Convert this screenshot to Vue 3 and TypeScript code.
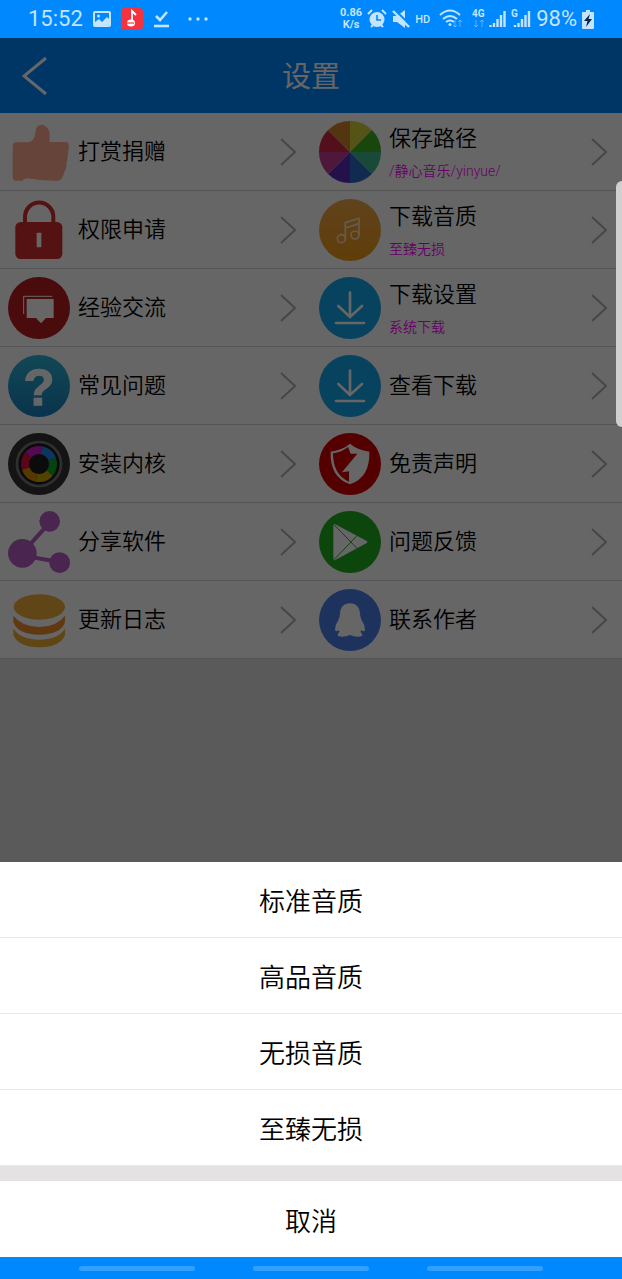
<script setup lang="ts">
interface Setting {
  icon: string
  title: string
  note?: string
}

const settings: Setting[] = [
  { icon: 'thumb', title: '打赏捐赠' },
  { icon: 'wheel', title: '保存路径', note: '/静心音乐/yinyue/' },
  { icon: 'lock', title: '权限申请' },
  { icon: 'music', title: '下载音质', note: '至臻无损' },
  { icon: 'chat', title: '经验交流' },
  { icon: 'download', title: '下载设置', note: '系统下载' },
  { icon: 'question', title: '常见问题' },
  { icon: 'download', title: '查看下载' },
  { icon: 'lens', title: '安装内核' },
  { icon: 'shield', title: '免责声明' },
  { icon: 'share', title: '分享软件' },
  { icon: 'play', title: '问题反馈' },
  { icon: 'discs', title: '更新日志' },
  { icon: 'penguin', title: '联系作者' },
]

const qualities: string[] = ['标准音质', '高品音质', '无损音质', '至臻无损']

const wheelColors = ['#d8d040', '#3cb01e', '#40b890', '#2c6cc8', '#5a28b8', '#c03c90', '#d02848', '#d08828']
const lensColors = ['#1e88e5', '#0fa52a', '#c9a800', '#d88a00', '#e0103c', '#d818c8']

function slice(index: number): string {
  const point = (n: number) => {
    const angle = (n * Math.PI) / 4
    return `${(93 + 93 * Math.sin(angle)).toFixed(1)} ${(93 - 93 * Math.cos(angle)).toFixed(1)}`
  }
  return `M93 93L${point(index)}A93 93 0 0 1 ${point(index + 1)}Z`
}
</script>

<template>
  <div class="screen">
    <header class="status">
      <div class="status-left">
        <span class="clock">15:52</span>
        <svg class="ic-picture" viewBox="0 0 18 16" aria-hidden="true">
          <rect x="1" y="1" width="16" height="14" rx="1" fill="none" stroke="currentColor" stroke-width="2" />
          <circle cx="5.500" cy="5" r="1.500" fill="currentColor" />
          <path d="M2 14V11L6 8L9 11L14 6L16 8V14Z" fill="currentColor" />
        </svg>
        <svg class="ic-app" viewBox="0 0 22 22" aria-hidden="true">
          <rect width="22" height="22" rx="4" fill="#f5333f" />
          <path d="M11 14V3L15 7" fill="none" stroke="#fff" stroke-width="1.800" />
          <ellipse cx="10" cy="15" rx="4" ry="3.600" fill="#fff" />
          <path d="M6 15H13" stroke="#f5333f" stroke-width="1.200" />
        </svg>
        <svg class="ic-check" viewBox="0 0 17 18" aria-hidden="true">
          <path d="M3 6L7 10L14 2" fill="none" stroke="currentColor" stroke-width="2.600" />
          <path d="M1 16H16" stroke="currentColor" stroke-width="2.600" />
        </svg>
        <svg class="ic-dots" viewBox="0 0 20 4" fill="currentColor" aria-hidden="true">
          <circle cx="2" cy="2" r="1.700" /><circle cx="10" cy="2" r="1.700" /><circle cx="18" cy="2" r="1.700" />
        </svg>
      </div>
      <div class="status-right">
        <span class="speed">0.86<br />K/s</span>
        <svg class="ic-alarm" viewBox="0 0 20 20" aria-hidden="true">
          <circle cx="10" cy="10.500" r="7.500" fill="currentColor" />
          <path d="M10 6V11H14" fill="none" stroke="#0088ff" stroke-width="1.600" />
          <path d="M1 5L5 1M19 5L15 1M4 18L6 16M16 18L14 16" stroke="currentColor" stroke-width="2" />
        </svg>
        <svg class="ic-mute" viewBox="0 0 18 20" aria-hidden="true">
          <path d="M1 7H5L13 1V19L5 13H1Z" fill="currentColor" />
          <path d="M3 1L18 16" stroke="#0088ff" stroke-width="2" />
          <path d="M1 2L17 18" stroke="currentColor" stroke-width="2.400" />
        </svg>
        <span class="hd">HD</span>
        <svg class="ic-wifi" viewBox="0 0 24 20" fill="none" stroke="currentColor" aria-hidden="true">
          <path d="M1 6Q11 -3 21 6M4 10Q11 4 18 10M7 13Q11 10 15 13" stroke-width="2" />
          <circle cx="11" cy="15.500" r="1.500" fill="currentColor" stroke="none" />
          <path d="M16 11V18M14 16L16 18L18 16M21 18V11M19 13L21 11L23 13" opacity="0.45" />
        </svg>
        <svg class="ic-net" viewBox="0 0 34 22" aria-hidden="true">
          <text x="0" y="9" class="net">4G</text>
          <path d="M4 12V19M2 17L4 19L6 17M10 19V12M8 14L10 12L12 14" fill="none" stroke="currentColor" opacity="0.45" />
          <path d="M18.500 17V19M22 15V19M25.500 11V19M29 7V19M32.500 3V19" stroke="currentColor" stroke-width="2.400" />
        </svg>
        <svg class="ic-signal" viewBox="0 0 20 22" aria-hidden="true">
          <text x="0" y="9" class="net">G</text>
          <path d="M4 17V19M7.500 15V19M11 11V19M14.500 7V19M18 3V19" stroke="currentColor" stroke-width="2.400" />
        </svg>
        <span class="clock">98%</span>
        <svg class="ic-battery" viewBox="0 0 12 19" aria-hidden="true">
          <path d="M4 0H8V2H11Q12 2 12 3V18Q12 19 11 19H1Q0 19 0 18V3Q0 2 1 2H4Z" fill="currentColor" />
          <path d="M8 4L2 11H5.500L4 17L10 9H6.500Z" fill="#0b2447" />
        </svg>
      </div>
    </header>

    <main class="page">
      <div class="titlebar">
        <button class="back" type="button" aria-label="返回">
          <svg viewBox="0 0 26 40" aria-hidden="true"><path d="M24 2L2 20L24 38" /></svg>
        </button>
        <h1>设置</h1>
      </div>

      <ul class="grid">
        <li v-for="item in settings" :key="item.title">
          <button class="cell" type="button">
            <svg class="icon" viewBox="0 0 186 186" aria-hidden="true">
              <path
                v-if="item.icon === 'thumb'"
                fill="#ffab91"
                d="M22 64H58Q80 62 82 35Q83 12 99 11Q118 12 124 32Q127 48 124 63H176Q184 66 182 76Q184 84 180 92Q183 100 178 108Q180 118 175 126Q178 140 170 150Q164 178 150 179Q100 180 58 172Q45 174 44 179H22Q15 178 14 170V74Q15 65 22 64Z"
              />
              <template v-else-if="item.icon === 'wheel'">
                <path v-for="(color, n) in wheelColors" :key="color" :d="slice(n)" :fill="color" />
              </template>
              <template v-else-if="item.icon === 'lock'">
                <path d="M51 75V54A42 43 0 0 1 136 54V75" fill="none" stroke="#d32f2f" stroke-width="12" />
                <rect x="22" y="69" width="141" height="111" rx="16" fill="#d32f2f" />
                <rect x="86" y="101" width="14" height="44" rx="2" fill="#fff" />
              </template>
              <template v-else-if="item.icon === 'music'">
                <circle cx="93" cy="93" r="93" fill="url(#amber)" />
                <g fill="none" stroke="#ffe3b8" stroke-width="5" stroke-linejoin="round">
                  <circle cx="67" cy="119" r="12" /><circle cx="108" cy="108" r="12" />
                  <path d="M79 119V71L120 58V108M79 87L120 74" />
                </g>
              </template>
              <template v-else-if="item.icon === 'chat'">
                <circle cx="93" cy="93" r="93" fill="#b71c1c" />
                <path d="M133 58H47V111" fill="none" stroke="#fff" stroke-width="3" />
                <path d="M56 66H137V123H114L99 139L84 123H56Z" fill="#fff" />
              </template>
              <template v-else-if="item.icon === 'download'">
                <circle cx="93" cy="93" r="93" fill="#12a5ea" />
                <path
                  d="M93 47V119M58 87L93 120L129 87M51 138H135"
                  fill="none"
                  stroke="#fff"
                  stroke-width="8"
                  stroke-linecap="round"
                />
              </template>
              <template v-else-if="item.icon === 'question'">
                <circle cx="93" cy="93" r="93" fill="url(#azure)" />
                <text x="93" y="151" class="mark">?</text>
              </template>
              <template v-else-if="item.icon === 'lens'">
                <circle cx="93" cy="93" r="93" fill="#333" />
                <circle cx="93" cy="93" r="66" fill="#1c1c1c" stroke="#777" stroke-width="8" />
                <circle
                  v-for="(color, n) in lensColors"
                  :key="color"
                  cx="93"
                  cy="93"
                  r="42"
                  fill="none"
                  stroke-width="24"
                  pathLength="6"
                  stroke-dasharray="1 5"
                  transform="rotate(-80 93 93)"
                  :stroke="color"
                  :stroke-dashoffset="-n"
                />
              </template>
              <template v-else-if="item.icon === 'shield'">
                <circle cx="93" cy="93" r="93" fill="#d50000" />
                <path d="M93 32Q114 50 151 56Q154 132 93 154Q32 132 35 56Q72 50 93 32Z" fill="#fff" />
                <path d="M42 61Q68 58 87 42L95 62H115L69 118L90 115V146Q42 126 42 61Z" fill="#d50000" />
              </template>
              <template v-else-if="item.icon === 'share'">
                <path d="M55 113L120 40M50 135L150 152" stroke="#ba5cc8" stroke-width="12" />
                <g fill="#ba5cc8">
                  <circle cx="125" cy="31" r="31" /><circle cx="43" cy="127" r="43" /><circle cx="155" cy="155" r="31" />
                </g>
              </template>
              <template v-else-if="item.icon === 'play'">
                <circle cx="93" cy="93" r="93" fill="#1fb01f" />
                <path d="M46 42V145L142 93Z" fill="#fff" stroke="#fff" stroke-width="6" stroke-linejoin="round" />
                <path d="M43 39L119 117M43 148L119 69" stroke="#1fb01f" stroke-width="3" />
              </template>
              <template v-else-if="item.icon === 'discs'">
                <ellipse cx="94" cy="54" rx="77" ry="38" fill="#f0ae38" />
                <path d="M16 80Q40 112 94 114Q148 112 171 80V99Q160 136 94 137Q28 136 16 99Z" fill="#ef8f2e" />
                <path d="M16 119Q36 150 94 152Q152 150 171 119V138Q158 174 94 175Q30 174 16 138Z" fill="#f0ae38" />
              </template>
              <template v-else>
                <circle cx="93" cy="93" r="93" fill="#4a80e8" />
                <path
                  fill="#fff"
                  d="M93 43C112 43 123 56 123 76Q124 84 128 94Q138 108 138 122Q136 130 128 124L124 128Q132 135 129 141Q112 146 93 138Q74 146 57 141Q54 135 62 128L58 124Q50 130 48 122Q48 108 58 94Q62 84 63 76C63 56 74 43 93 43Z"
                />
              </template>
            </svg>
            <span class="label">
              <span class="title">{{ item.title }}</span>
              <span v-if="item.note" class="note">{{ item.note }}</span>
            </span>
            <svg class="chevron" viewBox="0 0 16 30" aria-hidden="true"><path d="M1 2L15 15L1 28" /></svg>
          </button>
        </li>
      </ul>

      <svg class="defs" aria-hidden="true">
        <defs>
          <linearGradient id="amber" x1="0" y1="0" x2="0" y2="1">
            <stop offset="0" stop-color="#f0a848" /><stop offset="1" stop-color="#f09a18" />
          </linearGradient>
          <linearGradient id="azure" x1="0" y1="0" x2="0" y2="1">
            <stop offset="0" stop-color="#2cb4d4" /><stop offset="1" stop-color="#1a80c0" />
          </linearGradient>
        </defs>
      </svg>

      <div class="mask">
        <div class="sheet" role="dialog" aria-label="下载音质">
          <button v-for="quality in qualities" :key="quality" class="option" type="button">{{ quality }}</button>
          <button class="option cancel" type="button">取消</button>
        </div>
      </div>
      <div class="edge"></div>
    </main>

    <nav class="navbar" aria-label="系统导航">
      <button type="button" aria-label="最近任务"></button>
      <button type="button" aria-label="主屏幕"></button>
      <button type="button" aria-label="后退"></button>
    </nav>
  </div>
</template>

<style>
body {
  margin: 0;
}
</style>

<style scoped>
.screen {
  display: flex;
  flex-direction: column;
  min-height: 100vh;
  font-family: Roboto, "Noto Sans CJK SC", sans-serif;
  color: #000;
}

button {
  margin: 0;
  padding: 0;
  border: 0;
  background: none;
  font: inherit;
  color: inherit;
  cursor: pointer;
}

svg {
  display: block;
  flex: none;
}

.status {
  display: flex;
  justify-content: space-between;
  align-items: center;
  height: 38px;
  padding: 0 28px;
  background: #0088ff;
  color: #c4e4ff;
}

.status-left,
.status-right {
  display: flex;
  align-items: center;
}

.status-left {
  gap: 10px;
}

.status-right {
  gap: 5px;
}

.clock {
  font-size: 22px;
  line-height: 38px;
}

.speed {
  font-size: 11px;
  font-weight: 700;
  line-height: 12px;
  text-align: center;
}

.hd {
  margin-right: 4px;
  font-size: 11px;
  font-weight: 500;
}

.ic-picture { width: 18px; height: 16px; }
.ic-app { width: 22px; height: 22px; }
.ic-check { width: 17px; height: 18px; }
.ic-dots { width: 20px; height: 4px; margin-left: 8px; }
.ic-alarm { width: 20px; height: 20px; }
.ic-mute { width: 18px; height: 20px; }
.ic-wifi { width: 24px; height: 20px; margin-right: 4px; }
.ic-net { width: 34px; height: 22px; }
.ic-signal { width: 20px; height: 22px; }
.ic-battery { width: 12px; height: 19px; }

.net {
  font-size: 10px;
  font-weight: 700;
  fill: currentColor;
}

.page {
  position: relative;
  flex: 1;
  background: #e0e0e0;
}

.titlebar {
  display: grid;
  grid-template-columns: 72px 1fr 72px;
  align-items: center;
  height: 75px;
  background: #0088ff;
  color: #fff;
}

.back {
  padding-left: 22px;
}

.back svg {
  width: 26px;
  height: 40px;
  fill: none;
  stroke: #fff;
  stroke-width: 3;
}

h1 {
  margin: 0;
  padding-top: 4px;
  font-size: 29px;
  font-weight: 400;
  line-height: 71px;
  text-align: center;
}

.grid {
  display: grid;
  grid-template-columns: 1fr 1fr;
  margin: 0;
  padding: 0;
  list-style: none;
  background: #fff;
}

.cell {
  display: flex;
  align-items: center;
  gap: 8px;
  width: 100%;
  height: 78px;
  padding: 0 15px 0 8px;
  border-bottom: 1px solid #d0d0d0;
  text-align: left;
}

.icon {
  width: 62px;
  height: 62px;
}

.mark {
  fill: #fff;
  stroke: #fff;
  stroke-width: 4px;
  font: 700 152px "Liberation Sans", sans-serif;
  text-anchor: middle;
}

.label {
  display: flex;
  flex: 1;
  flex-direction: column;
}

.title {
  font-size: 22px;
  font-weight: 350;
  line-height: 38px;
}

.note {
  font-size: 14px;
  font-weight: 350;
  line-height: 26px;
  color: #ff00ff;
}

.chevron {
  width: 16px;
  height: 30px;
  fill: none;
  stroke: #b0b0b0;
  stroke-width: 2;
}

.defs {
  position: absolute;
  width: 0;
  height: 0;
}

.mask {
  position: absolute;
  inset: 0;
  display: flex;
  flex-direction: column;
  justify-content: flex-end;
  background: rgba(0, 0, 0, 0.6);
}

.sheet {
  display: flex;
  flex-direction: column;
  background: #fff;
}

.option {
  height: 76px;
  padding-top: 6px;
  border-bottom: 1px solid #e8e8e8;
  font-size: 26px;
  font-weight: 350;
  line-height: 69px;
  text-align: center;
}

.cancel {
  height: 91px;
  border-top: 15px solid #e4e2e3;
  border-bottom: 0;
}

.edge {
  position: absolute;
  top: 143px;
  right: 0;
  width: 6px;
  height: 246px;
  border-radius: 6px 0 0 6px;
  background: #d0d0d0;
}

.navbar {
  display: flex;
  height: 22px;
  padding: 0 50px;
  background: #0088ff;
}

.navbar button {
  display: flex;
  flex: 1;
  align-items: center;
  justify-content: center;
}

.navbar button::before {
  width: 116px;
  height: 5px;
  border-radius: 3px;
  background: #33a0ff;
  content: "";
}
</style>
